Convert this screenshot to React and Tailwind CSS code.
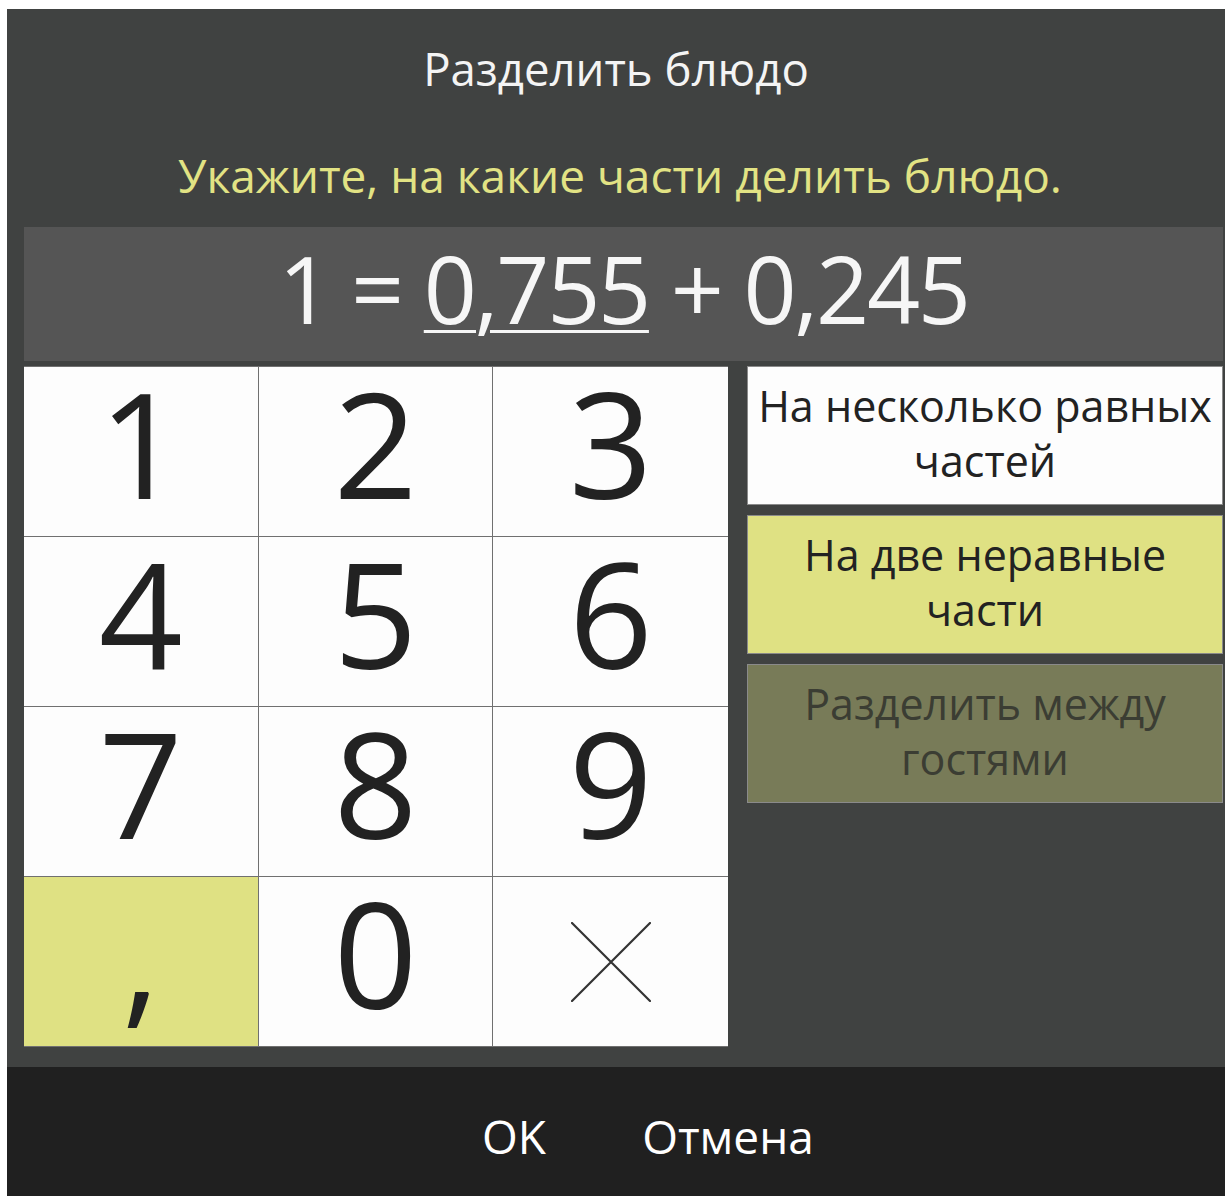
import React, { useState } from 'react';

const KEYS = ['1', '2', '3', '4', '5', '6', '7', '8', '9', ',', '0', 'del'];

const MODES = [
  { id: 'equal', label: 'На несколько равных частей' },
  { id: 'unequal', label: 'На две неравные части' },
  { id: 'guests', label: 'Разделить между гостями', disabled: true },
];

const font = { fontFamily: '"Open Sans", "Noto Sans", sans-serif' };

const CrossIcon = () => (
  <svg width="80" height="80" viewBox="0 0 80 80" fill="none">
    <path d="M1 1 L79 79 M79 1 L1 79" stroke="#333333" strokeWidth="2.2" strokeLinecap="round" />
  </svg>
);

const SplitDish = () => {
  const [mode, setMode] = useState('unequal');
  const [left, setLeft] = useState('0,755');

  const right = (() => {
    const n = parseFloat(left.replace(',', '.'));
    if (isNaN(n)) return '';
    return (1 - n).toFixed(3).replace('.', ',');
  })();

  const press = (k) => {
    if (k === 'del') {
      setLeft((v) => v.slice(0, -1));
    } else {
      setLeft((v) => (v.length < 5 ? v + k : v));
    }
  };

  return (
    <div className="h-screen bg-white pt-[9px] pl-[7px]" style={font}>
      <div className="flex h-[1187px] w-[1218px] flex-col bg-[#404241]">
        <div className="flex h-[122px] items-center justify-center pb-[4px] text-[45.5px] text-[#f4f4f4]">
          Разделить блюдо
        </div>
        <div className="flex h-[96px] items-center justify-center pb-[8px] pl-[8px] text-[46px] text-[#e2e384]">
          Укажите, на какие части делить блюдо.
        </div>

        <div className="pl-[17px] pr-[2px]">
          {/* current equation */}
          <div className="flex h-[134px] items-center justify-center whitespace-pre bg-[#555555] pb-[12px] text-[93px] leading-none tracking-[-0.025em] text-[#f6f6f6]">
            <span>{'1 = '}</span>
            <span className="underline decoration-[3px] underline-offset-[6px]">{left}</span>
            <span>{' + ' + right}</span>
          </div>

          <div className="mt-[5px] flex gap-[19px]">
            {/* numeric keypad */}
            <div className="grid w-[704px] grid-cols-3 grid-rows-4 border-t border-[#707070]">
              {KEYS.map((k, i) => (
                <button
                  key={k}
                  onClick={() => press(k)}
                  className={`flex h-[170px] items-center justify-center border-b border-[#707070] text-[147px] leading-[110px] text-[#222222] ${
                    i % 3 !== 2 ? 'border-r' : ''
                  } ${k === ',' ? 'bg-[#dfe183]' : 'bg-[#fdfdfd]'}`}
                >
                  {k === 'del' ? <CrossIcon /> : <span className="-mt-[20px]">{k}</span>}
                </button>
              ))}
            </div>

            {/* split modes */}
            <div className="flex flex-1 flex-col gap-[10px]">
              {MODES.map((m) => (
                <button
                  key={m.id}
                  disabled={m.disabled}
                  onClick={() => setMode(m.id)}
                  className={`flex h-[139px] items-center justify-center border border-[#8a8a8a] px-[4px] text-center text-[43px] leading-[55px] ${
                    m.disabled
                      ? 'bg-[#787b58] text-[#3b3d33]'
                      : mode === m.id
                      ? 'bg-[#dfe183] text-[#222222]'
                      : 'bg-[#fdfdfd] text-[#222222]'
                  }`}
                >
                  <span className="-mt-[6px]">{m.label}</span>
                </button>
              ))}
            </div>
          </div>
        </div>

        <div className="mt-auto flex h-[129px] items-center justify-center bg-[#202020] pl-[10px] pt-[10px] text-[46px] text-white">
          <button className="w-[214px]">OK</button>
          <button className="w-[214px]">Отмена</button>
        </div>
      </div>
    </div>
  );
};

export default function App() {
  return <SplitDish />;
}
